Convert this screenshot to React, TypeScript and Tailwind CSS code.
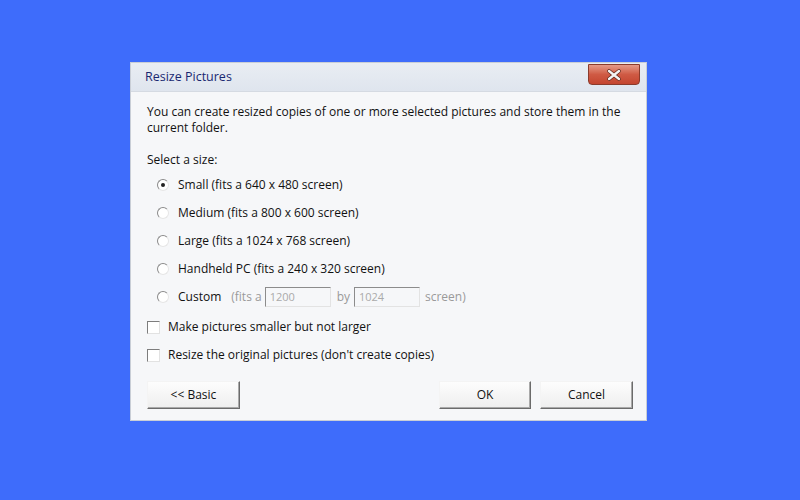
import React from "react";

const font = { fontFamily: '"Open Sans", "DejaVu Sans", sans-serif' };

const Radio = ({ checked }: { checked?: boolean }) => (
  <span className="relative inline-block h-[12px] w-[12px] shrink-0 rounded-full border border-t-[#8a8a8a] border-l-[#8a8a8a] border-b-[#e6e6e6] border-r-[#e6e6e6] bg-white">
    {checked && <span className="absolute left-[3px] top-[3px] h-[4px] w-[4px] rounded-full bg-[#222]" />}
  </span>
);

const Check = () => (
  <span className="inline-block h-[13px] w-[13px] shrink-0 border border-t-[#7d7d7d] border-l-[#7d7d7d] border-b-[#e2e2e2] border-r-[#e2e2e2] bg-white" />
);

const Btn = ({ label, w }: { label: string; w: string }) => (
  <button
    className={`${w} h-[28px] border border-t-[#f4f4f4] border-l-[#f4f4f4] border-b-[#6b6b6b] border-r-[#6b6b6b] bg-gradient-to-b from-[#fdfdfd] to-[#eeeeee] text-[12px] text-[#111] shadow-[inset_-1px_-1px_0_#a9a9a9]`}
  >
    {label}
  </button>
);

const options = [
  "Small (fits a 640 x 480 screen)",
  "Medium (fits a 800 x 600 screen)",
  "Large (fits a 1024 x 768 screen)",
  "Handheld PC (fits a 240 x 320 screen)",
];

export default function App() {
  return (
    <div className="h-[500px] w-[800px] bg-[#3e6cfb] pt-[62px] pl-[130px]" style={font}>
      <div className="w-[517px] border border-[#c9ced6] bg-[#f6f7f9]">
        <div className="relative flex h-[28px] items-center bg-gradient-to-b from-[#e9edf3] to-[#dfe5ee] pl-[14px] text-[12.5px] text-[#1a2870]">
          Resize Pictures
          <div className="absolute right-[6px] top-[1px] flex h-[21px] w-[52px] items-center justify-center rounded-b-[4px] border border-[#8a3b2c] bg-gradient-to-b from-[#e49a88] via-[#cf5a44] to-[#c4452f]">
            <svg width="16" height="12" viewBox="0 0 16 12">
              <path d="M3 2 L13 10 M13 2 L3 10" stroke="#5a2318" strokeWidth="3.6" strokeLinecap="round" />
              <path d="M3 2 L13 10 M13 2 L3 10" stroke="#f4f4f4" strokeWidth="2.4" strokeLinecap="round" />
            </svg>
          </div>
        </div>
        <div className="border-t border-[#d5dae2] pl-[16px] pr-[13px] pt-[12px] pb-[11px] text-[12px] text-[#111]">
          <p className="pr-[3px] leading-[16px]">
            You can create resized copies of one or more selected pictures and store them in the current folder.
          </p>
          <p className="mt-[16px] leading-[16px]">Select a size:</p>
          <div className="mt-[3px] flex flex-col pl-[10px]">
            {options.map((o, i) => (
              <label key={o} className="flex h-[28px] items-center gap-[9px]">
                <Radio checked={i === 0} />
                <span>{o}</span>
              </label>
            ))}
            <label className="flex h-[28px] items-center gap-[9px]">
              <Radio />
              <span>Custom</span>
              <span className="ml-[1px] flex items-center text-[#9a9a9a]">
                (fits a
                <span className="ml-[3px] flex h-[20px] w-[66px] items-center border border-t-[#8c8c8c] border-l-[#8c8c8c] border-b-[#e3e3e3] border-r-[#e3e3e3] bg-[#f6f7f9] pl-[4px] text-[11px] text-[#aaa]">
                  1200
                </span>
                <span className="ml-[6px]">by</span>
                <span className="ml-[4px] flex h-[20px] w-[66px] items-center border border-t-[#8c8c8c] border-l-[#8c8c8c] border-b-[#e3e3e3] border-r-[#e3e3e3] bg-[#f6f7f9] pl-[4px] text-[11px] text-[#aaa]">
                  1024
                </span>
                <span className="ml-[5px]">screen)</span>
              </span>
            </label>
          </div>
          <div className="mt-[2px] flex flex-col">
            <label className="flex h-[28px] items-center gap-[8px]">
              <Check />
              <span>Make pictures smaller but not larger</span>
            </label>
            <label className="flex h-[28px] items-center gap-[8px]">
              <Check />
              <span>Resize the original pictures (don't create copies)</span>
            </label>
          </div>
          <div className="mt-[12px] flex items-center">
            <Btn label="<< Basic" w="w-[93px]" />
            <div className="ml-auto flex gap-[9px]">
              <Btn label="OK" w="w-[92px]" />
              <Btn label="Cancel" w="w-[93px]" />
            </div>
          </div>
        </div>
      </div>
    </div>
  );
}
